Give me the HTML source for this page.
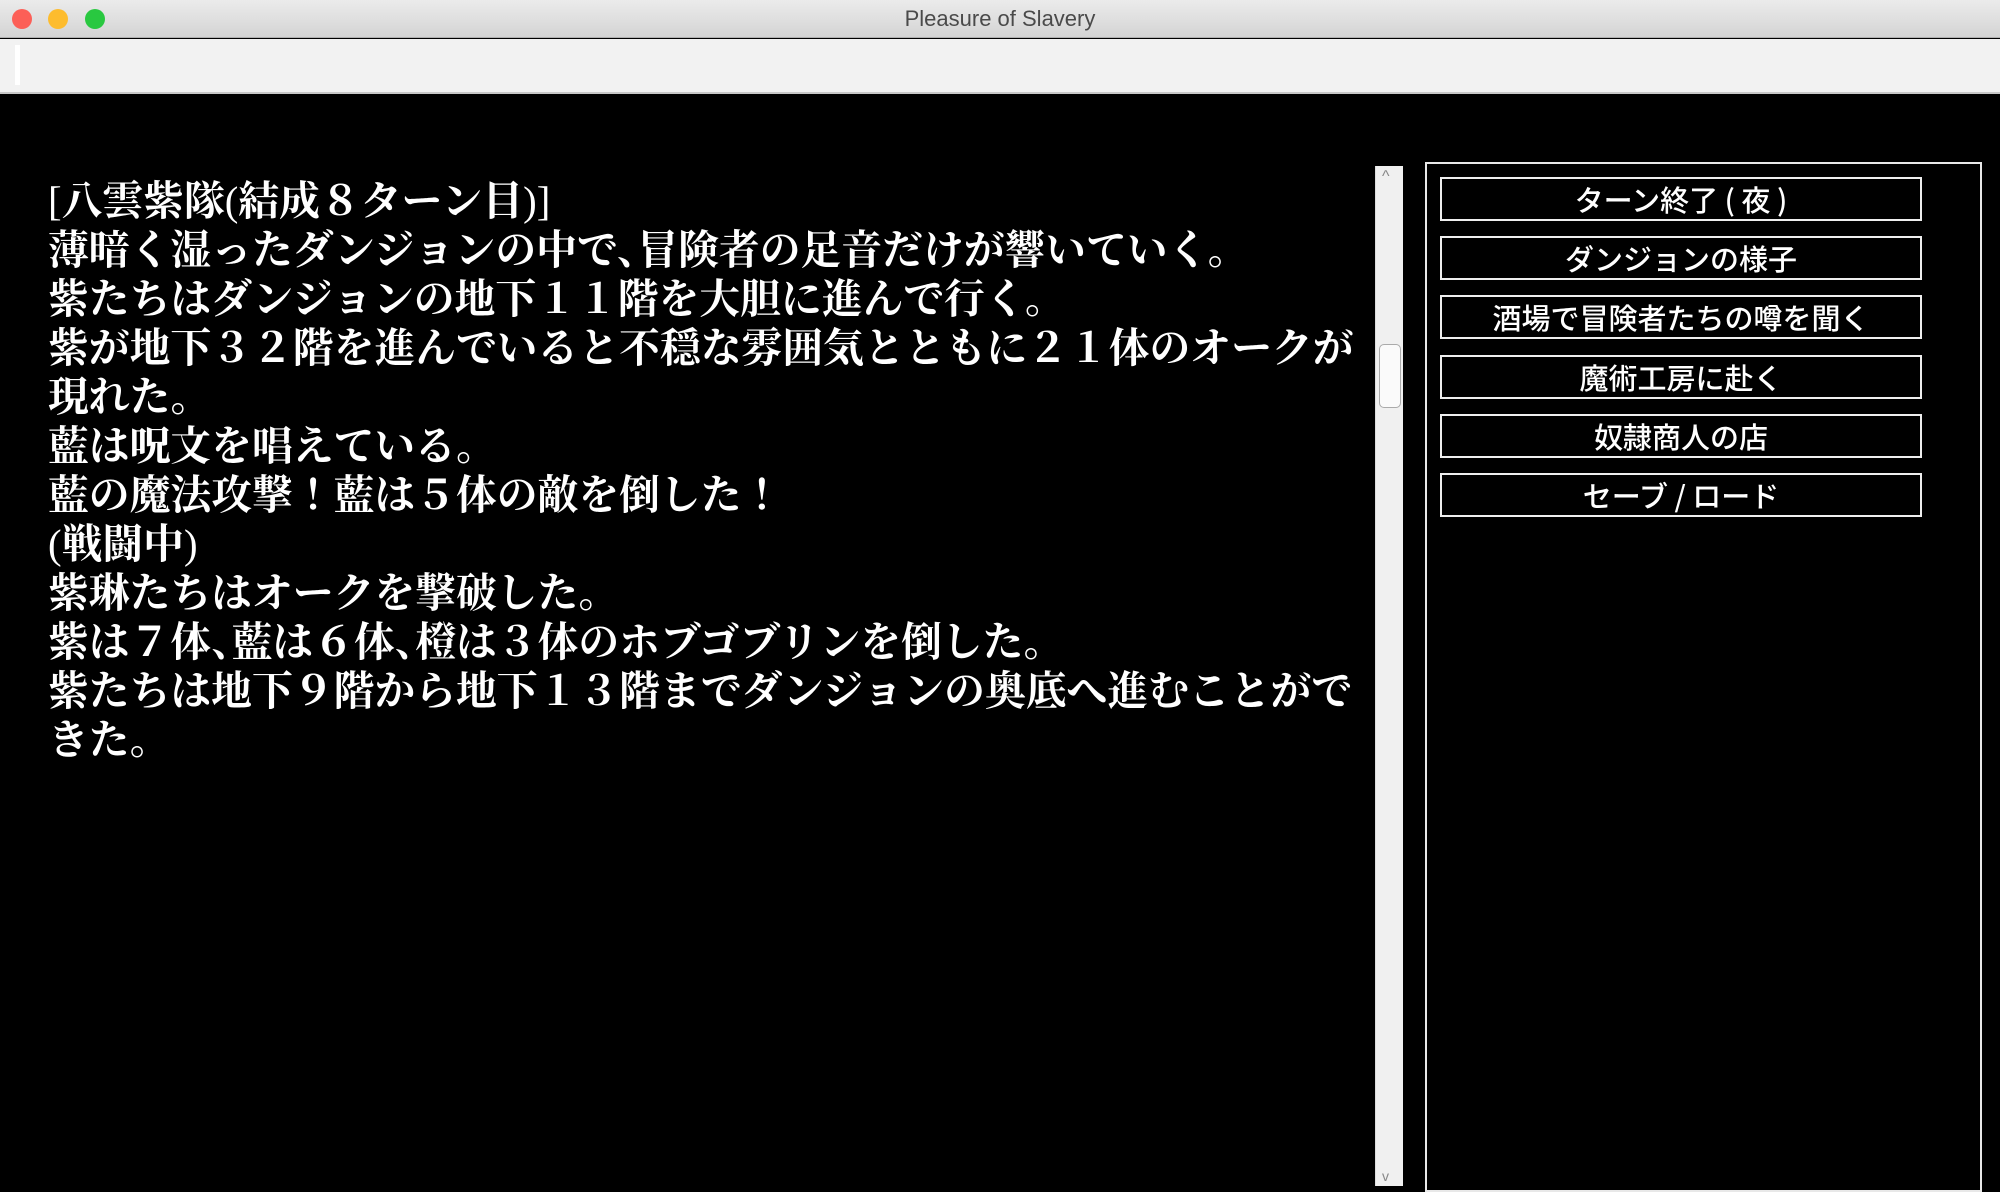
<!DOCTYPE html>
<html><head><meta charset="utf-8"><style>
*{margin:0;padding:0;box-sizing:border-box}
body{width:2000px;height:1186px;background:#000;overflow:hidden;position:relative;font-family:"Liberation Sans","Noto Sans CJK JP",sans-serif}
#tb{position:absolute;left:0;top:0;width:2000px;height:38px;background:linear-gradient(#ebebeb,#d4d4d4);border-bottom:1px solid #b0b0b0;text-align:center;font-size:22px;line-height:38px;color:#4a4a4a}
.l{position:absolute;top:9px;width:20px;height:20px;border-radius:50%}
#bar{position:absolute;left:0;top:39px;width:2000px;height:55px;background:#f2f2f2;border-bottom:2px solid #c8c8c8}
#bar i{position:absolute;left:15px;top:6px;width:5px;height:40px;background:#fff}
#txt{position:absolute;left:48px;top:177px;font-family:"Liberation Serif","Noto Serif CJK JP",serif;font-weight:700;font-size:40.8px;line-height:49px;color:#fff;white-space:nowrap}
.c{margin-right:-0.5em}
.p{font-weight:400}
#sb{position:absolute;left:1375px;top:166px;width:28px;height:1020px;background:#f0f0f0;border-left:1px solid #ddd}
#th{position:absolute;left:3px;top:178px;width:22px;height:64px;background:#fafafa;border:1px solid #aaa;border-radius:5px}
#panel{position:absolute;left:1425px;top:162px;width:557px;height:1030px;border:2px solid #e8e8e8}
.b{position:absolute;left:1440px;width:482px;height:44px;border:2px solid #eee;color:#fff;text-align:center;font-size:29px;line-height:40px;font-family:"Noto Sans CJK JP",sans-serif;font-weight:500}
</style></head><body>
<div id="tb">Pleasure of Slavery
<span class="l" style="left:12px;background:#fc5f57"></span><span class="l" style="left:48px;background:#fdbc2e"></span><span class="l" style="left:85px;background:#29c840"></span></div>
<div id="bar"><i></i></div>
<div id="txt"><span class="p">[</span>八雲紫隊<span class="p">(</span>結成８ターン目<span class="p">)]</span><br>薄暗く湿ったダンジョンの中で<span class="c">、</span>冒険者の足音だけが響いていく。<br>紫たちはダンジョンの地下１１階を大胆に進んで行く。<br>紫が地下３２階を進んでいると不穏な雰囲気とともに２１体のオークが<br>現れた。<br>藍は呪文を唱えている。<br>藍の魔法攻撃！藍は５体の敵を倒した！<br><span class="p">(</span>戦闘中<span class="p">)</span><br>紫琳たちはオークを撃破した。<br>紫は７体<span class="c">、</span>藍は６体<span class="c">、</span>橙は３体のホブゴブリンを倒した。<br>紫たちは地下９階から地下１３階までダンジョンの奥底へ進むことがで<br>きた。</div>
<div id="sb"><div style="position:absolute;left:6px;top:2px;font-size:16px;color:#888">^</div><div id="th"></div><div style="position:absolute;left:6px;bottom:2px;font-size:14px;color:#888">v</div></div>
<div id="panel"></div>
<div class="b" style="top:177px">ターン終了 ( 夜 )</div>
<div class="b" style="top:236px">ダンジョンの様子</div>
<div class="b" style="top:295px">酒場で冒険者たちの噂を聞く</div>
<div class="b" style="top:355px">魔術工房に赴く</div>
<div class="b" style="top:414px">奴隷商人の店</div>
<div class="b" style="top:473px">セーブ / ロード</div>
</body></html>
